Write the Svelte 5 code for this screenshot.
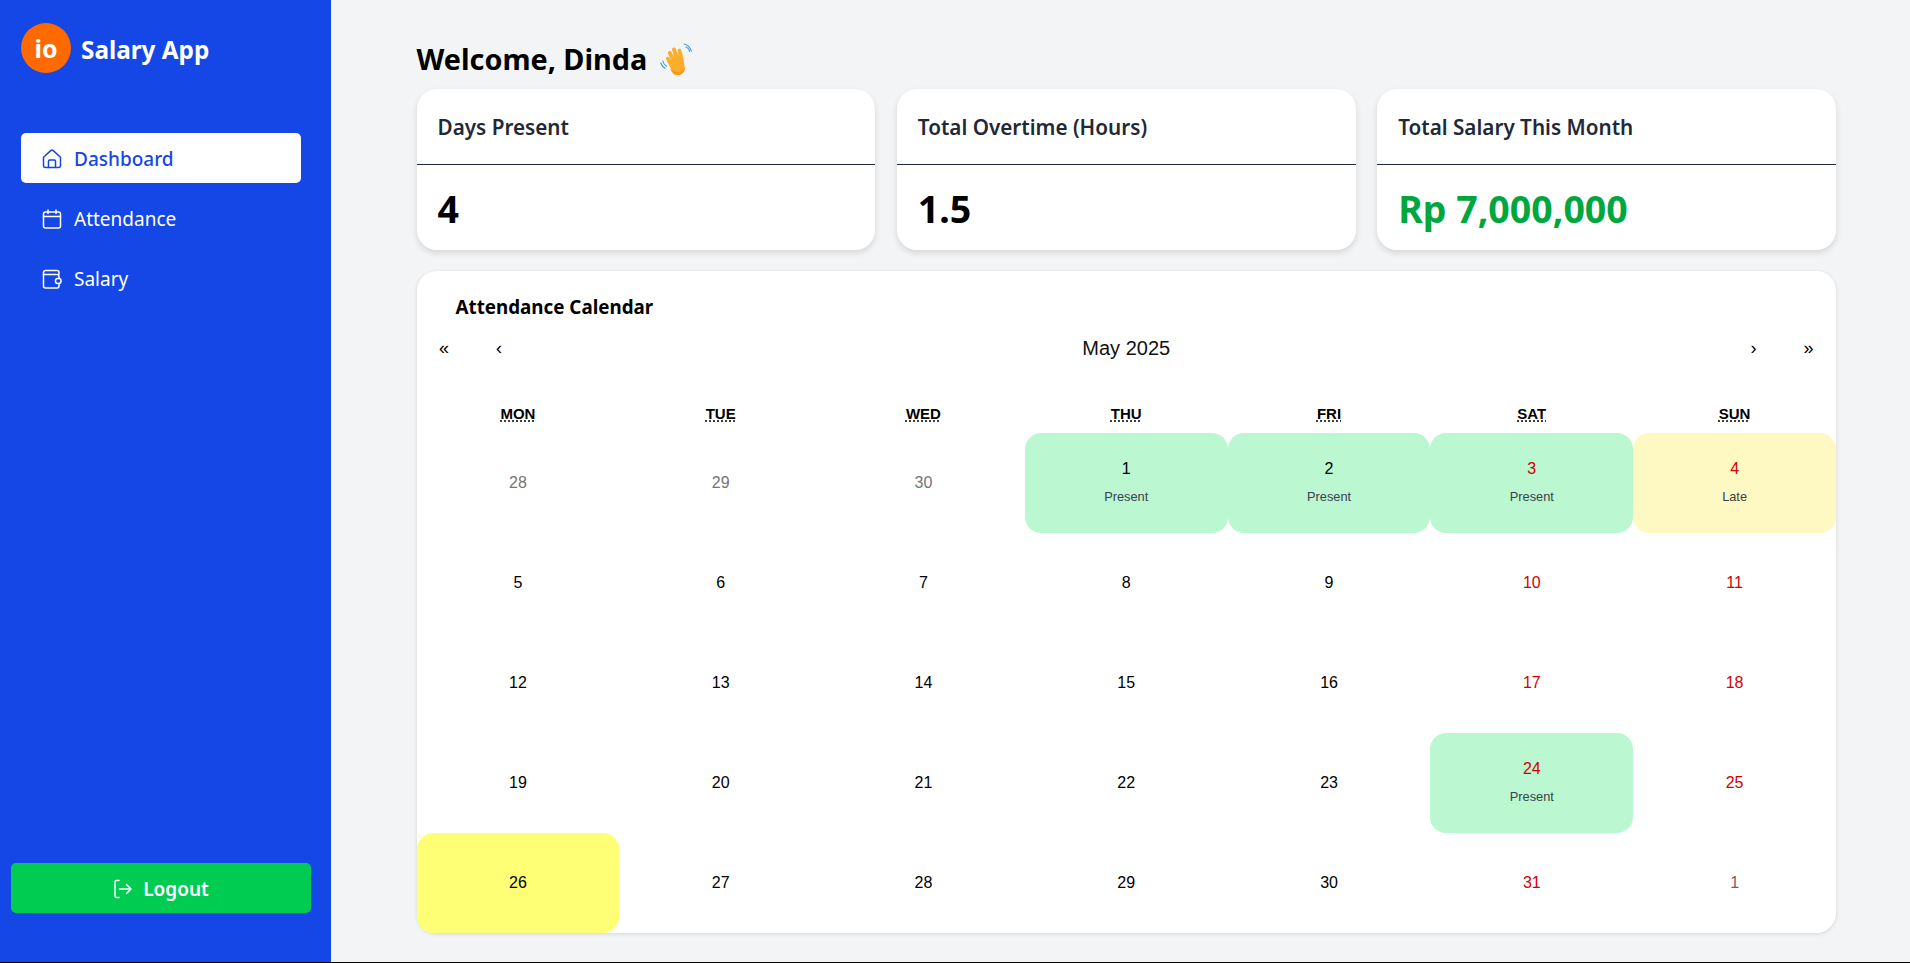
<script>
  const weekdays = ['Mon', 'Tue', 'Wed', 'Thu', 'Fri', 'Sat', 'Sun'];
  const cards = [
    { title: 'Days Present', value: '4' },
    { title: 'Total Overtime (Hours)', value: '1.5' },
    { title: 'Total Salary This Month', value: 'Rp 7,000,000', green: true }
  ];
  const tiles = [];
  const status = { 1: 'Present', 2: 'Present', 3: 'Present', 4: 'Late', 24: 'Present' };
  [28, 29, 30].forEach((d) => tiles.push({ d, cls: 'other' }));
  for (let d = 1; d <= 31; d++) {
    const col = tiles.length % 7;
    tiles.push({ d, cls: (col >= 5 ? 'weekend ' : '') + (status[d] ? status[d].toLowerCase() : '') + (d === 26 ? ' today' : ''), label: status[d] });
  }
  tiles.push({ d: 1, cls: 'other weekend' });
</script>

<div class="shell">
  <aside class="sidebar">
    <div class="brand">
      <span class="logo">io</span>
      <span class="brand-name">Salary App</span>
    </div>
    <nav class="menu">
      <a class="item active" href="#d">
        <svg viewBox="0 0 20 20" class="icon"><path d="M1.500 8.200 8.700 1.600a2 2 0 0 1 2.600 0l7.200 6.600V16.500a2 2 0 0 1-2 2h-13a2 2 0 0 1-2-2Z"/><path d="M6.500 18.500V12a1 1 0 0 1 1-1h5a1 1 0 0 1 1 1v6.500"/></svg>
        Dashboard
      </a>
      <a class="item" href="#a">
        <svg viewBox="0 0 20 20" class="icon"><rect x="1.500" y="3" width="17" height="16" rx="2"/><path d="M1.500 7.500h17M6 1v3.500M14 1v3.500"/></svg>
        Attendance
      </a>
      <a class="item" href="#s">
        <svg viewBox="0 0 20 20" class="icon"><path d="M17 5V3.500A2 2 0 0 0 15 1.500H3.500a2 2 0 0 0-2 2V17a2 2 0 0 0 2 2H15a2 2 0 0 0 2-2v-2.500"/><path d="M1.500 5.500H15a2 2 0 0 1 2 2V9.500"/><rect x="13.500" y="9.500" width="5.500" height="5" rx="2.200"/></svg>
        Salary
      </a>
    </nav>
    <button class="logout">
      <svg viewBox="0 0 20 20" class="icon"><path d="M6 1.500H3.500a1.500 1.500 0 0 0-1.500 1.500v14a1.500 1.500 0 0 0 1.500 1.500H6"/><path d="M6.500 10h11.500M13.500 5.500 18 10l-4.500 4.500"/></svg>
      Logout
    </button>
  </aside>

  <main class="main">
    <h1 class="welcome">Welcome, Dinda
      <svg class="wave" viewBox="0 0 34 32">
        <path d="M11 26 6.200 16.500c-1-2.300 2-3.800 3.300-1.600l2 3.400-3.500-7.600c-1-2.400 2.300-3.900 3.500-1.600l3 5.800-2.400-8c-.6-2.500 2.800-3.400 3.700-1l2.800 7.500-1-5.500c-.3-2.500 3-3 3.700-.7l2 7.500 1.200 7.800c.6 4.600-1.700 8.500-5.600 9.300-4.400.9-6.800-1-8.500-5.800Z" fill="#fbae2c"/>
        <path d="M11 26c1.700 4.800 4.100 6.700 8.500 5.800 3.900-.8 6.200-4.700 5.600-9.300-.5 4-3 6.500-6.600 6.500-3.200 0-5.500-1.300-7.500-3Z" fill="#f39a1c"/>
        <path d="M26 4c2 .8 3.300 2.400 3.800 4.500M24 1c3.500.8 6.200 3.400 7.400 7M2.800 18c.5 2.400 1.800 4.200 3.800 5.300M.8 20c.8 2.500 2.200 4.200 4.300 5.300" fill="none" stroke="#3f97d8" stroke-width="1.100" stroke-linecap="round"/>
      </svg>
    </h1>
    <section class="cards">
      {#each cards as c}
        <article class="card">
          <header class="card-head">{c.title}</header>
          <div class="card-body" class:green={c.green}>{c.value}</div>
        </article>
      {/each}
    </section>
    <section class="calendar">
      <h2 class="cal-title">Attendance Calendar</h2>
      <div class="cal-nav">
        <button>«</button><button>‹</button>
        <span class="month">May 2025</span>
        <button>›</button><button>»</button>
      </div>
      <div class="grid">
        {#each weekdays as w}
          <div class="weekday"><abbr title={w}>{w}</abbr></div>
        {/each}
        {#each tiles as t}
          <div class="tile {t.cls}">
            <span>{t.d}</span>
            {#if t.label}<small>{t.label}</small>{/if}
          </div>
        {/each}
      </div>
    </section>
  </main>
</div>

<style>
  :global(body) { margin: 0; background: #000; font-family: "Noto Sans", sans-serif; }
  .shell { display: flex; height: 962px; background: #f3f4f6; border-bottom: 1px solid #000; }
  .sidebar { width: 331px; flex: none; background: #1546e6; color: #fff; display: flex; flex-direction: column; box-sizing: border-box; padding: 23px 30px 49px 21px; }
  .brand { display: flex; align-items: center; gap: 10px; height: 50px; }
  .logo { width: 50px; height: 50px; border-radius: 50%; background: #ff6a00; display: flex; align-items: center; justify-content: center; font-weight: 700; font-size: 25px; }
  .brand-name { font-weight: 700; font-size: 24.300px; padding-top: 3px; }
  .menu { margin-top: 60px; display: flex; flex-direction: column; gap: 10px; }
  .item { height: 50px; display: flex; align-items: center; gap: 12px; padding: 1px 0 0 21px; box-sizing: border-box; border-radius: 5px; color: #fff; font-size: 19px; text-decoration: none; }
  .item.active { background: #fff; color: #1546e6; font-weight: 500; }
  .icon { width: 20px; height: 20px; fill: none; stroke: currentColor; stroke-width: 1.500; stroke-linecap: round; stroke-linejoin: round; flex: none; }
  .logout { margin: auto 0 0 -10px; width: 300px; height: 50px; padding: 1px 0 0; border: 0; border-radius: 5px; background: #00cc52; color: #fff; font: 600 19px "Noto Sans", sans-serif; display: flex; align-items: center; justify-content: center; gap: 10px; }
  .main { flex: 1; padding: 0 74px 0 85.500px; min-width: 0; }
  .welcome { margin: 0; height: 89px; box-sizing: border-box; padding-top: 29px; font-size: 28.800px; line-height: 46px; font-weight: 700; color: #000; display: flex; align-items: center; gap: 13px; }
  .wave { width: 34px; height: 32px; margin-bottom: 1px; }
  .cards { display: grid; grid-template-columns: repeat(3, 1fr); gap: 21.500px; }
  .card { height: 161px; background: #fff; border-radius: 20px; box-shadow: 0 3px 6px rgba(0,0,0,.12); overflow: hidden; }
  .card-head { height: 76px; box-sizing: border-box; padding: 1px 21px 0; display: flex; align-items: center; border-bottom: 1px solid #1f2937; font-size: 20.700px; font-weight: 600; color: #1f2937; }
  .card-body { padding: 2px 21px 0; box-sizing: border-box; height: 85px; display: flex; align-items: center; font-size: 37.500px; font-weight: 700; color: #000; }
  .card-body.green { color: #00a63e; }
  .calendar { margin-top: 21px; height: 662px; background: #fff; border-radius: 20px; box-shadow: 0 1px 4px rgba(0,0,0,.12); }
  .cal-title { margin: 0; padding: 22px 0 0 39px; height: 34px; line-height: 28px; font-size: 18.800px; font-weight: 700; color: #000; }
  .cal-nav { display: flex; align-items: center; height: 44px; font-family: "Liberation Sans", sans-serif; }
  .cal-nav button { width: 55px; height: 44px; border: 0; background: none; font: 18px "Liberation Sans", sans-serif; color: #000; padding: 0 0 2px; }
  .month { flex: 1; text-align: center; font-size: 20px; color: #111; padding-bottom: 2px; }
  .grid { display: grid; grid-template-columns: repeat(7, 1fr); grid-template-rows: 62px repeat(5, 100px); font-family: "Liberation Sans", sans-serif; }
  .weekday { display: flex; justify-content: center; align-items: flex-end; padding-bottom: 11px; font-size: 15px; font-weight: 700; text-transform: uppercase; }
  abbr { text-decoration: underline dotted; text-underline-offset: 2px; }
  .tile { display: flex; flex-direction: column; align-items: center; justify-content: center; font-size: 16px; color: #000; border-radius: 16px; gap: 11px; }
  .tile:has(small) { padding-bottom: 3px; box-sizing: border-box; }
  .tile small { font-size: 12.800px; color: #374151; }
  .tile.weekend { color: #d10000; }
  .tile.other { color: #757575; }
  .tile.other.weekend { color: #7f5c5c; }
  .tile.present { background: #bbf7d0; }
  .tile.late { background: #fef9c3; }
  .tile.today { background: #ffff76; }
</style>
